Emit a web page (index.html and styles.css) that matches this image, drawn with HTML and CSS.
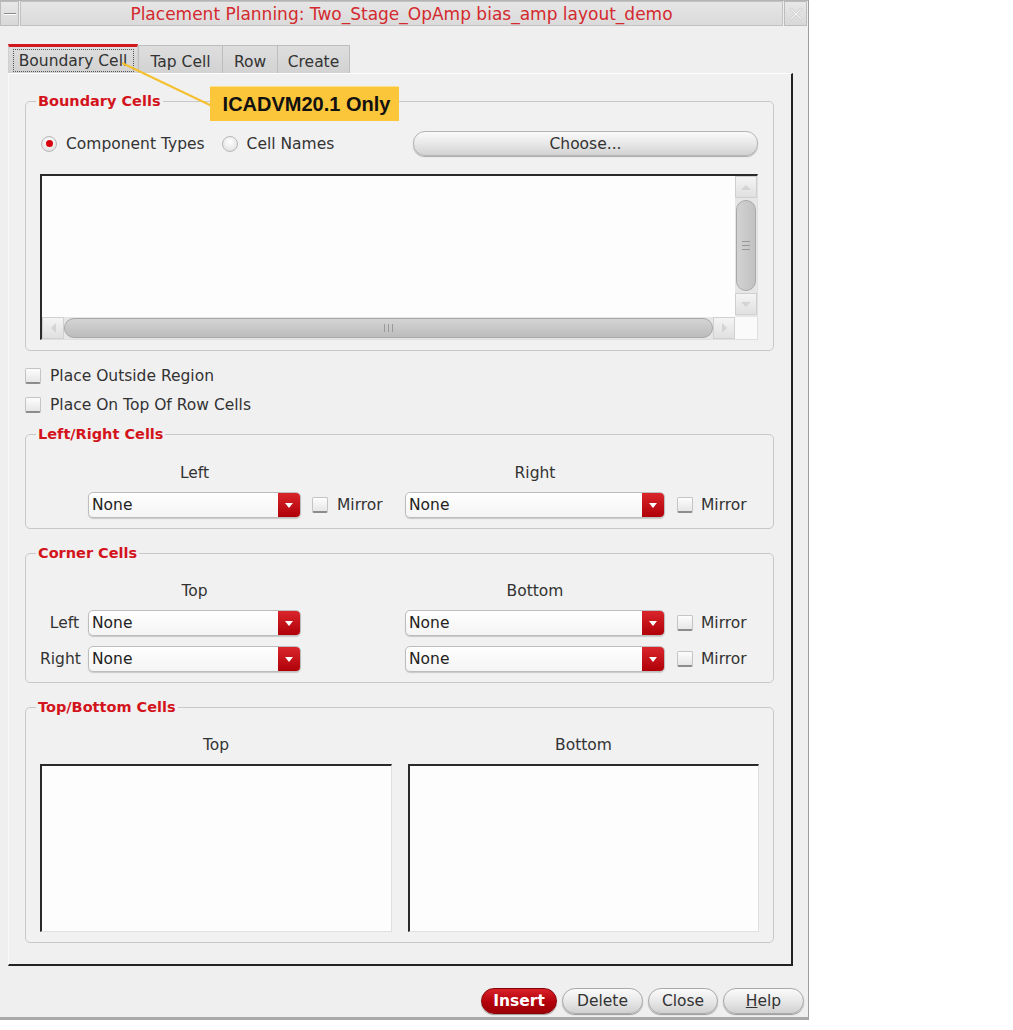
FILE: index.html
```html
<!DOCTYPE html>
<html lang="en">

<head>
     <meta charset="UTF-8">
     <meta name="viewport" content="width=device-width, initial-scale=1.0">
     <title>Placement Planning</title>
     <link rel="stylesheet" href="styles.css">
</head>

<body>
     <div class="dialog">
          <header class="titlebar">
               <span class="tb-btn tb-menu"><span class="dash"></span></span>
               <h1 class="tb-title">Placement Planning: Two_Stage_OpAmp bias_amp layout_demo</h1>
               <span class="tb-btn tb-close">
                    <svg width="14" height="14" viewBox="0 0 14 14">
                         <path d="M2 2 L12 12 M12 2 L2 12" stroke="#d6d6d6" stroke-width="3" stroke-linecap="round" />
                         <path d="M2 2 L12 12 M12 2 L2 12" stroke="#f6f6f6" stroke-width="1" />
                    </svg>
               </span>
          </header>

          <nav class="tabs">
               <span class="tab active"><span class="focus">Boundary Cell</span></span>
               <span class="tab tap">Tap Cell</span>
               <span class="tab row">Row</span>
               <span class="tab create">Create</span>
          </nav>

          <main class="panel">
               <fieldset class="group">
                    <legend>Boundary Cells</legend>
                    <div class="source-row">
                         <label class="radio"><span class="dot on"></span>Component Types</label>
                         <label class="radio"><span class="dot"></span>Cell Names</label>
                         <button class="btn choose">Choose...</button>
                    </div>
                    <div class="listbox big">
                         <div class="list-area"></div>
                         <div class="vscroll">
                              <span class="arrow up"></span>
                              <span class="thumb v"><span class="grip"></span></span>
                              <span class="arrow down"></span>
                         </div>
                         <div class="hscroll">
                              <span class="arrow left"></span>
                              <span class="thumb h"><span class="grip"></span></span>
                              <span class="arrow right"></span>
                         </div>
                         <div class="corner"></div>
                    </div>
               </fieldset>

               <label class="check-row"><span class="box"></span>Place Outside Region</label>
               <label class="check-row"><span class="box"></span>Place On Top Of Row Cells</label>

               <fieldset class="group sides lr">
                    <legend>Left/Right Cells</legend>
                    <div class="cell-row heads">
                         <span></span>
                         <span class="head">Left</span>
                         <span></span>
                         <span class="head">Right</span>
                    </div>
                    <div class="cell-row">
                         <span class="row-label"></span>
                         <div class="select"><span class="value">None</span><span class="drop"></span></div>
                         <label class="mirror"><span class="box"></span>Mirror</label>
                         <div class="select"><span class="value">None</span><span class="drop"></span></div>
                         <label class="mirror far"><span class="box"></span>Mirror</label>
                    </div>
               </fieldset>

               <fieldset class="group sides">
                    <legend>Corner Cells</legend>
                    <div class="cell-row heads">
                         <span></span>
                         <span class="head">Top</span>
                         <span></span>
                         <span class="head">Bottom</span>
                    </div>
                    <div class="cell-row">
                         <span class="row-label">Left</span>
                         <div class="select"><span class="value">None</span><span class="drop"></span></div>
                         <span></span>
                         <div class="select"><span class="value">None</span><span class="drop"></span></div>
                         <label class="mirror far"><span class="box"></span>Mirror</label>
                    </div>
                    <div class="cell-row">
                         <span class="row-label">Right</span>
                         <div class="select"><span class="value">None</span><span class="drop"></span></div>
                         <span></span>
                         <div class="select"><span class="value">None</span><span class="drop"></span></div>
                         <label class="mirror far"><span class="box"></span>Mirror</label>
                    </div>
               </fieldset>

               <fieldset class="group ends">
                    <legend>Top/Bottom Cells</legend>
                    <div class="ends-grid">
                         <span class="head">Top</span>
                         <span class="head">Bottom</span>
                         <div class="listbox plain"></div>
                         <div class="listbox plain"></div>
                    </div>
               </fieldset>
          </main>

          <footer class="actions">
               <button class="btn pill primary insert">Insert</button>
               <button class="btn pill delete">Delete</button>
               <button class="btn pill close">Close</button>
               <button class="btn pill help"><u>H</u>elp</button>
          </footer>

          <svg class="callout-line" width="240" height="130" viewBox="0 0 240 130">
               <line x1="122" y1="62" x2="214" y2="106" stroke="#f5c030" stroke-width="2" />
          </svg>
          <div class="callout">ICADVM20.1 Only</div>
     </div>
</body>

</html>
```

FILE: styles.css
```css
html {
     box-sizing: border-box;
     font-family: "DejaVu Sans", sans-serif;
     font-size: 15.5px;
}

*,
*:before,
*:after {
     box-sizing: inherit;
}

body {
     margin: 0;
     background-color: #fff;
     color: #333;
}

.dialog {
     position: relative;
     width: 809px;
     height: 1020px;
     background-color: #efefef;
     border-top: 1px solid #b4b4b4;
     border-right: 1px solid #9c9c9c;
     border-bottom: 3px solid #a9a9a9;
     display: flex;
     flex-direction: column;
}

/* title bar */
.titlebar {
     height: 25px;
     display: flex;
     gap: 1px;
}

.tb-btn {
     display: flex;
     align-items: center;
     justify-content: center;
     background: linear-gradient(#e8e8e8, #d8d8d8);
     border: 1px solid #bcbcbc;
}

.tb-menu {
     width: 19px;
}

.dash {
     width: 12px;
     height: 2px;
     background-color: #8a8a8a;
     border-bottom: 1px solid #fff;
}

.tb-close {
     width: 23px;
     margin-right: 1px;
}

.tb-title {
     flex-grow: 1;
     margin: 0;
     background: linear-gradient(#e6e6e6, #dadada);
     border: 1px solid #c2c2c2;
     color: #d4292e;
     font-size: 17px;
     font-weight: normal;
     line-height: 24px;
     text-align: center;
}

/* tabs */
.tabs {
     display: flex;
     margin-top: 18px;
     padding-left: 8px;
     height: 29px;
     align-items: flex-end;
}

.tab {
     height: 28px;
     display: flex;
     align-items: center;
     justify-content: center;
     padding-top: 4px;
     background: linear-gradient(#dedede, #d2d2d2);
     border: 1px solid #bdbdbd;
     border-bottom: none;
     color: #333;
     font-size: 15.5px;
}

.tab.active {
     width: 130px;
     height: 29px;
     padding-top: 0;
     background-color: #f5f5f5;
     border-top: 3px solid #d3171f;
     border-left: 1px solid #d0d0d0;
     border-right: 1px solid #d0d0d0;
     align-items: flex-end;
     padding-bottom: 1px;
}

.focus {
     display: block;
     width: 121px;
     height: 23px;
     line-height: 22px;
     text-align: center;
     border: 1px dotted #555;
}

.tab.tap {
     width: 85px;
}

.tab.row {
     width: 55px;
     border-left: none;
}

.tab.create {
     width: 72px;
     border-left: none;
}

/* main panel */
.panel {
     width: 785px;
     margin-left: 8px;
     padding: 18px 17px 21px 16px;
     background-color: #f0f0f0;
     border-top: 1px solid #fff;
     border-left: 1px solid #fafafa;
     border-right: 2px solid #222;
     border-bottom: 2px solid #222;
}

.group {
     margin: 0;
     min-width: 0;
     padding: 0 15px 10px 14px;
     border: 1px solid #c8c8c8;
     border-radius: 5px;
     background-color: #f1f1f1;
}

.group legend {
     margin-left: -4px;
     padding: 0 2px;
     color: #d3141c;
     font-size: 14.5px;
     font-weight: bold;
     line-height: 18px;
}

.source-row {
     display: flex;
     align-items: center;
     height: 25px;
     margin-top: 21px;
}

.radio {
     display: flex;
     align-items: center;
     margin-right: 16px;
     color: #333;
}

.dot {
     width: 16px;
     height: 16px;
     margin: 0 9px 0 1px;
     border-radius: 50%;
     border: 1px solid #b8b8b8;
     background: radial-gradient(circle at 50% 35%, #fff, #dadada);
     display: flex;
     align-items: center;
     justify-content: center;
}

.dot.on:after {
     content: "";
     width: 7px;
     height: 7px;
     border-radius: 50%;
     background-color: #d8000c;
}

.btn {
     font-family: "DejaVu Sans", sans-serif;
     font-size: 15.5px;
     color: #333;
     cursor: pointer;
}

.choose {
     margin-left: auto;
     width: 345px;
     height: 25px;
     border: 1px solid #b4b4b4;
     border-radius: 12px;
     background: linear-gradient(#fafafa, #e8e8e8 50%, #d2d2d2);
     box-shadow: 0 1px 1px #aaa;
}

/* list boxes */
.listbox {
     background-color: #fdfdfd;
     border-top: 2px solid #2a2a2a;
     border-left: 2px solid #2a2a2a;
     border-right: 1px solid #e0e0e0;
     border-bottom: 1px solid #e0e0e0;
}

.listbox.big {
     margin-top: 18px;
     height: 166px;
     display: grid;
     grid-template-columns: 1fr 22px;
     grid-template-rows: 1fr 22px;
}

.vscroll {
     display: flex;
     flex-direction: column;
     background-color: #e6e6e6;
}

.hscroll {
     display: flex;
     background-color: #e6e6e6;
}

.corner {
     background-color: #fafafa;
}

.arrow {
     flex: 0 0 22px;
     height: 22px;
     display: flex;
     align-items: center;
     justify-content: center;
     background: linear-gradient(#f4f4f4, #e0e0e0);
     border: 1px solid #d0d0d0;
}

.arrow:after {
     content: "";
     width: 0;
     height: 0;
     border: 5px solid transparent;
}

.arrow.up:after {
     border-bottom-color: #d4d4d4;
     margin-top: -5px;
}

.arrow.down:after {
     border-top-color: #d4d4d4;
     margin-top: 5px;
}

.arrow.left:after {
     border-right-color: #d4d4d4;
     margin-left: -5px;
}

.arrow.right:after {
     border-left-color: #d4d4d4;
     margin-left: 5px;
}

.thumb {
     display: flex;
     align-items: center;
     justify-content: center;
     background: linear-gradient(90deg, #d2d2d2, #c2c2c2);
     border: 1px solid #a8a8a8;
     border-radius: 10px;
}

.thumb.v {
     height: 91px;
     margin: 2px 1px;
}

.thumb.h {
     flex-grow: 1;
     margin: 1px 0;
     background: linear-gradient(#d4d4d4, #bcbcbc);
}

.thumb.v .grip {
     width: 8px;
     height: 9px;
     border-top: 1px solid #999;
     border-bottom: 1px solid #999;
     background: linear-gradient(transparent 3px, #999 3px, #999 4px, transparent 4px);
}

.thumb.h .grip {
     width: 9px;
     height: 8px;
     border-left: 1px solid #999;
     border-right: 1px solid #999;
     background: linear-gradient(90deg, transparent 3px, #999 3px, #999 4px, transparent 4px);
}

/* check rows */
.check-row {
     display: flex;
     align-items: center;
     height: 20px;
     margin-top: 9px;
     color: #333;
}

.check-row:first-of-type {
     margin-top: 15px;
}

.box {
     flex: 0 0 16px;
     height: 16px;
     margin-right: 9px;
     border: 1px solid #c4c4c4;
     border-bottom: 2px solid #8c8c8c;
     border-radius: 2px;
     background: linear-gradient(#fdfdfd, #e6e6e6);
}

.sides {
     margin-top: 10px;
}

.sides + .sides,
.ends {
     margin-top: 15px;
}

.cell-row {
     display: grid;
     grid-template-columns: 48px 213px 104px 260px 1fr;
     height: 26px;
     margin-top: 10px;
     align-items: center;
}

.cell-row.heads {
     height: 18px;
     margin-top: 20px;
}

.lr .cell-row.heads {
     margin-top: 21px;
}

.head {
     height: 18px;
     line-height: 18px;
     text-align: center;
}

.row-label {
     text-align: right;
     padding-right: 9px;
}

.select {
     height: 26px;
     display: flex;
     border: 1px solid #bdbdbd;
     border-radius: 5px;
     background: linear-gradient(#fff, #f4f4f4);
     box-shadow: 0 1px 1px #c8c8c8;
     overflow: hidden;
}

.select .value {
     flex-grow: 1;
     padding-left: 3px;
     line-height: 24px;
     color: #222;
}

.select .drop {
     width: 22px;
     display: flex;
     align-items: center;
     justify-content: center;
     background: linear-gradient(#d9262c, #b00008);
}

.select .drop:after {
     content: "";
     border: 4px solid transparent;
     border-top: 5px solid #fff;
     margin-top: 5px;
}

.mirror {
     display: flex;
     align-items: center;
     padding-left: 11px;
     color: #333;
}

.mirror .box {
     margin-right: 9px;
}

.mirror.far {
     padding-left: 12px;
}

.mirror.far .box {
     margin-right: 8px;
}

.ends-grid {
     display: grid;
     grid-template-columns: 352px 351px;
     grid-template-rows: 18px 168px;
     column-gap: 16px;
     row-gap: 10px;
     margin-top: 20px;
}

/* bottom buttons */
.actions {
     display: flex;
     justify-content: flex-end;
     gap: 5px;
     margin-top: 22px;
     padding-right: 4px;
}

.pill {
     height: 26px;
     padding: 0;
     border: 1px solid #aaa;
     border-radius: 13px;
     background: linear-gradient(#fbfbfb, #e8e8e8 50%, #d0d0d0);
     box-shadow: 0 1px 1px #999;
     font-size: 15.5px;
}

.pill.primary {
     border-color: #8a0006;
     background: linear-gradient(#d8222a, #b3000a 55%, #9c0006);
     color: #fff;
     font-weight: bold;
}

.insert {
     width: 76px;
}

.delete {
     width: 81px;
}

.close {
     width: 70px;
}

.help {
     width: 81px;
}

/* annotation overlay */
.callout-line {
     position: absolute;
     left: 0;
     top: 0;
}

.callout {
     position: absolute;
     left: 210px;
     top: 85px;
     width: 189px;
     height: 35px;
     padding-left: 4px;
     background-color: #fbc63a;
     border-top: 1px solid #fde08a;
     color: #111;
     font-family: "Liberation Sans", Arial, sans-serif;
     font-size: 20px;
     font-weight: bold;
     line-height: 34px;
     text-align: center;
}
```
